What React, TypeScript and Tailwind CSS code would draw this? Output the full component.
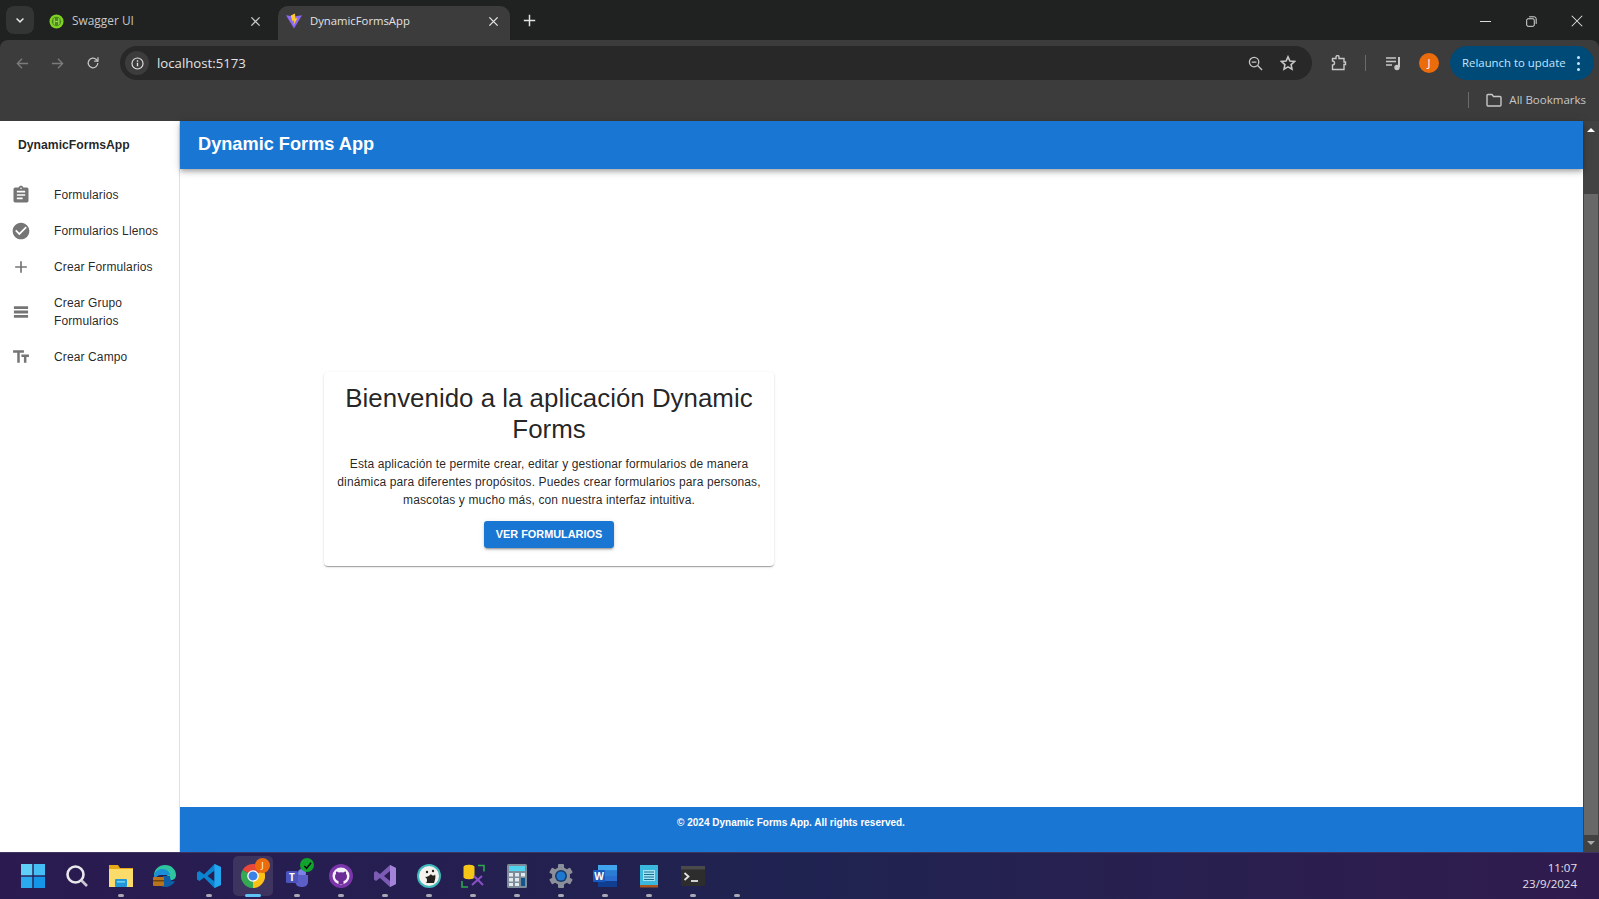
import type { ReactNode } from 'react'

const navItems = [
  {
    label: 'Formularios',
    d: 'M19 3h-4.18C14.4 1.84 13.3 1 12 1c-1.3 0-2.4.84-2.82 2H5c-1.1 0-2 .9-2 2v14c0 1.1.9 2 2 2h14c1.1 0 2-.9 2-2V5c0-1.1-.9-2-2-2zm-7 0c.55 0 1 .45 1 1s-.45 1-1 1-1-.45-1-1 .45-1 1-1zm2 14H7v-2h7v2zm3-4H7v-2h10v2zm0-4H7V7h10v2z',
  },
  {
    label: 'Formularios Llenos',
    d: 'M12 2C6.48 2 2 6.48 2 12s4.48 10 10 10 10-4.48 10-10S17.52 2 12 2zm-2 15l-5-5 1.41-1.41L10 14.17l7.59-7.59L19 8l-9 9z',
  },
  { label: 'Crear Formularios', d: 'M19 13h-6v6h-2v-6H5v-2h6V5h2v6h6v2z' },
  { label: 'Crear Grupo Formularios', d: 'M3.5 5h17v3.4h-17zM3.5 10.3h17v3.4h-17zM3.5 15.6h17V19h-17z' },
  { label: 'Crear Campo', d: 'M2.5 4v3h5v12h3V7h5V4h-13zm19 5h-9v3h3v7h3v-7h3V9z' },
]

function Stroke({ size = 16, className, children }: { size?: number; className?: string; children: ReactNode }) {
  return (
    <svg width={size} height={size} viewBox="0 0 16 16" fill="none" stroke="currentColor" strokeWidth="1.4" className={className}>
      {children}
    </svg>
  )
}

function Tab({ active, title, icon }: { active?: boolean; title: string; icon: ReactNode }) {
  return (
    <div className={`flex h-[34px] items-center rounded-t-[10px] pb-[4px] ${active ? 'w-[232px] bg-[#3c3c3c] pl-[8px] text-[#e3e3e3]' : 'w-[244px] pl-[14px] text-[#c7c7c7]'}`}>
      <span className="flex w-[16px] justify-center">{icon}</span>
      <span className={`ml-[8px] w-[178px] ${active ? 'text-[11.3px]' : 'text-[11.9px]'}`}>{title}</span>
      <Stroke size={11}>
        <path d="M2 2l12 12M14 2L2 14" strokeWidth="2" />
      </Stroke>
    </div>
  )
}

function BrowserChrome() {
  return (
    <header className="shrink-0 font-['Open_Sans',sans-serif]">
      <div className="flex h-[40px] items-end bg-[#202121] pl-[6px]">
        <div className="mb-[6px] flex h-[28px] w-[28px] items-center justify-center rounded-[8px] bg-[#333535] text-[#e3e3e3]">
          <Stroke size={10}>
            <path d="M2.5 5.5L8 11l5.5-5.5" strokeWidth="2.4" />
          </Stroke>
        </div>
        <Tab
          title="Swagger UI"
          icon={
            <svg width="15" height="15" viewBox="0 0 16 16">
              <circle cx="8" cy="8" r="7.5" fill="#7fd321" />
              <circle cx="8" cy="8" r="5" fill="#4a8b17" />
              <path d="M6 5H5.5v6H6M10 5h.5v6H10M6.8 8h2.4" stroke="#b9f06e" strokeWidth="1" fill="none" />
            </svg>
          }
        />
        <Tab
          active
          title="DynamicFormsApp"
          icon={
            <svg width="16" height="16" viewBox="0 0 16 16">
              <path d="M0 2.2L8 15.5 16 2.2 8 3.6z" fill="#8d68f5" />
              <path d="M9 .5L4.8 2.5 6.3 8 8 7.5 7.6 12l4-7-2.3.5z" fill="#fdc92e" />
            </svg>
          }
        />
        <div className="mb-[13px] ml-[13px] text-[#e3e3e3]">
          <Stroke size={13}>
            <path d="M8 1v14M1 8h14" strokeWidth="1.8" />
          </Stroke>
        </div>
        <div className="mb-[13px] ml-auto flex items-center text-[#e3e3e3]">
          <div className="flex w-[46px] justify-center">
            <Stroke size={11}>
              <path d="M0 8h16" />
            </Stroke>
          </div>
          <div className="flex w-[46px] justify-center">
            <Stroke size={11}>
              <rect x="1" y="4" width="11" height="11" rx="2" />
              <path d="M4.5 1.2h7.3a3 3 0 0 1 3 3v7.3" />
            </Stroke>
          </div>
          <div className="flex w-[45px] justify-center pl-[1px]">
            <Stroke size={12}>
              <path d="M1 1l14 14M15 1L1 15" />
            </Stroke>
          </div>
        </div>
      </div>

      <div className="bg-[#202121]">
        <div className="rounded-t-[8px] bg-[#3c3c3c]">
          <div className="flex h-[42px] items-center pt-[4px] pl-[15px]">
            <div className="flex w-[105px] items-center text-[#7b7b7b]">
              <Stroke size={15}>
                <path d="M14 8H2.5M7.5 3l-5 5 5 5" />
              </Stroke>
              <Stroke size={15} className="ml-[20px]">
                <path d="M2 8h11.5M8.5 3l5 5-5 5" />
              </Stroke>
              <Stroke size={14} className="ml-[21px] text-[#c7c7c7]">
                <path d="M13.5 8A5.5 5.5 0 1 1 11.8 4L13.5 5.7" />
                <path d="M13.7 1.5v4.4H9.3" />
              </Stroke>
            </div>
            <div className="flex h-[34px] w-[1192px] items-center rounded-full bg-[#282828] pl-[5px] pr-[16px]">
              <div className="flex h-[24px] w-[24px] items-center justify-center rounded-full bg-[#3c3c3c] text-[#e3e3e3]">
                <Stroke size={13}>
                  <circle cx="8" cy="8" r="6.8" />
                  <path d="M8 7v4.5M8 4v1.7" strokeWidth="1.7" />
                </Stroke>
              </div>
              <span className="ml-[8px] pt-[1px] text-[13.2px] text-[#e3e3e3]">localhost:5173</span>
              <div className="ml-auto flex items-center gap-[17px] text-[#c7c7c7]">
                <Stroke size={15}>
                  <circle cx="6.5" cy="6.5" r="5" />
                  <path d="M10.2 10.2L15 15M4 6.5h5" />
                </Stroke>
                <Stroke size={16}>
                  <path d="M8 1.8l1.9 4.2 4.6.5-3.4 3.1.9 4.5L8 11.8l-4 2.3.9-4.5L1.5 6.5l4.6-.5z" strokeWidth="1.6" />
                </Stroke>
              </div>
            </div>
            <div className="ml-[19px] text-[#c7c7c7]">
              <Stroke size={16}>
                <path d="M1.5 3.5H5V2a1.5 1.5 0 0 1 3 0v1.5h5V7h1.500v2.500H13v5H1.500V10a2 2 0 0 0 0-4z" />
              </Stroke>
            </div>
            <div className="ml-[18px] h-[16px] w-[1px] bg-[#6b6b6b]" />
            <div className="ml-[20px] text-[#c7c7c7]">
              <Stroke size={16}>
                <path d="M0 3h10M0 6.5h10M0 10h6" />
                <path d="M13 2v10" strokeWidth="2" />
                <circle cx="11" cy="12.5" r="2" fill="currentColor" />
              </Stroke>
            </div>
            <div className="ml-[17px] flex h-[20px] w-[20px] items-center justify-center rounded-full bg-[#ec6c0b] text-[11px] text-white">J</div>
            <div className="ml-[11px] flex h-[34px] w-[144px] items-center rounded-full bg-[#004a77] pl-[12px] text-[11.4px] text-[#c2e7ff]">
              Relaunch to update
              <span className="ml-[11px] flex flex-col gap-[3px]">
                <i className="h-[3px] w-[3px] rounded-full bg-[#c2e7ff]" />
                <i className="h-[3px] w-[3px] rounded-full bg-[#c2e7ff]" />
                <i className="h-[3px] w-[3px] rounded-full bg-[#c2e7ff]" />
              </span>
            </div>
          </div>
          <div className="flex h-[39px] items-center justify-end pr-[13px] pb-[3px] text-[#c7c7c7]">
            <div className="mr-[17px] h-[16px] w-[1px] bg-[#6b6b6b]" />
            <Stroke size={16}>
              <path d="M1 3.5a1 1 0 0 1 1-1h4l1.5 2H14a1 1 0 0 1 1 1V13a1 1 0 0 1-1 1H2a1 1 0 0 1-1-1z" />
            </Stroke>
            <span className="ml-[7px] text-[11.5px]">All Bookmarks</span>
          </div>
        </div>
      </div>
    </header>
  )
}

function Sidebar() {
  return (
    <aside className="w-[180px] shrink-0 border-r border-[#e0e0e0] bg-white">
      <div className="flex h-[48px] items-center pl-[18px] pt-[1px] text-[12.2px] font-bold text-[rgba(0,0,0,0.87)]">DynamicFormsApp</div>
      <nav className="pt-[8px]">
        {navItems.map((item) => (
          <div key={item.label} className="flex items-center pl-[11px] pr-[16px]">
            <svg width="20" height="20" viewBox="0 0 24 24" fill="#757575" className="shrink-0">
              <path d={item.d} />
            </svg>
            <span className="ml-[23px] py-[9px] text-[12px] leading-[18px] tracking-[0.01em] text-[rgba(0,0,0,0.87)]">{item.label}</span>
          </div>
        ))}
      </nav>
    </aside>
  )
}

function Scrollbar() {
  return (
    <div className="flex w-[16px] shrink-0 flex-col items-center bg-[#424242]">
      <div className="mt-[7px] h-0 w-0 border-x-[4px] border-b-[4px] border-x-transparent border-b-white" />
      <div className="mt-[62px] h-[641px] w-[14px] bg-[#686868]" />
      <div className="mt-[6px] h-0 w-0 border-x-[4px] border-t-[4px] border-x-transparent border-t-[#a8a8a8]" />
    </div>
  )
}

function TaskIcon({ children, active, running = true }: { children: ReactNode; active?: boolean; running?: boolean }) {
  return (
    <div className="relative flex h-[44px] w-[44px] items-center justify-center">
      {active && <span className="absolute inset-x-[2px] bottom-[2px] top-[2px] rounded-[5px] bg-[#3d3560]" />}
      <span className="relative flex">{children}</span>
      {running && <span className={`absolute bottom-[1px] h-[3px] rounded-full ${active ? 'w-[16px] bg-[#5fc4f5]' : 'w-[6px] bg-[#a9a6b5]'}`} />}
    </div>
  )
}

function Taskbar() {
  return (
    <footer className="flex h-[47px] shrink-0 items-center border-t border-[#3f3560] bg-linear-to-r from-[#2a1a50] via-[#1f2350] to-[#301b4e] pl-[11px] font-['Open_Sans',sans-serif]">
      <TaskIcon running={false}>
        <svg width="24" height="24" viewBox="0 0 24 24">
          <rect width="11.3" height="11.3" fill="#5fd0f8" />
          <rect x="12.7" width="11.3" height="11.3" fill="#45bdf5" />
          <rect y="12.7" width="11.3" height="11.3" fill="#2aa9ef" />
          <rect x="12.7" y="12.7" width="11.3" height="11.3" fill="#1495e8" />
        </svg>
      </TaskIcon>
      <TaskIcon running={false}>
        <svg width="24" height="24" viewBox="0 0 24 24" fill="none">
          <circle cx="10.5" cy="10.5" r="8" stroke="#e8e8ea" strokeWidth="2.6" />
          <path d="M16.5 16.5L22 22" stroke="#c9c9cf" strokeWidth="2.6" />
        </svg>
      </TaskIcon>
      <TaskIcon>
        <svg width="24" height="24" viewBox="0 0 24 24">
          <path d="M0 1h9l2 3h13v19H0z" fill="#e8a917" />
          <rect y="5" width="24" height="18" fill="#fbdc6a" />
          <rect x="6" y="15" width="12" height="8" rx="1" fill="#1f97d8" />
          <rect x="8" y="17" width="8" height="1.6" fill="#6fd0f5" />
        </svg>
      </TaskIcon>
      <TaskIcon running={false}>
        <svg width="24" height="24" viewBox="0 0 24 24">
          <path d="M1 12C1 5 6 1 12 1c7 0 11 5 11 10 0 3-2 5-5 5-2 0-3-1-3-2 0-3-3-6-7-6-3 0-6 2-7 4z" fill="#2fc4a0" />
          <path d="M1 12c1-5 5-7 8-7 5 0 8 3 8 6H8c-3 0-6 2-7 5z" fill="#1a8fd8" />
          <path d="M10 12h7c0 5 3 6 5 5-2 4-6 6-10 6-2 0-4-1-5-2z" fill="#0c5fa8" />
          <rect y="13" width="11" height="9" rx="1" fill="#b8741a" />
          <rect y="16" width="11" height="1.5" fill="#6e430d" />
        </svg>
      </TaskIcon>
      <TaskIcon>
        <svg width="24" height="24" viewBox="0 0 24 24">
          <path d="M17.5 0L24 3v18l-6.5 3L7 13.5 2.5 17 0 15.5v-7L2.5 7 7 10.500z" fill="#0a84d0" />
          <path d="M17.5 6.5v11L10.500 12z" fill="#2a1f50" />
          <path d="M17.5 0L24 3v18l-6.5 3v-6.500-11z" fill="#23a5ef" />
        </svg>
      </TaskIcon>
      <TaskIcon active>
        <svg width="24" height="24" viewBox="0 0 24 24">
          <path d="M12 12L1.6 6A12 12 0 0 1 22.4 6z" fill="#e8483a" />
          <path d="M12 12L22.4 6A12 12 0 0 1 12 24z" fill="#fbc116" />
          <path d="M12 12L12 24A12 12 0 0 1 1.6 6z" fill="#34a853" />
          <circle cx="12" cy="12" r="5.8" fill="#fff" />
          <circle cx="12" cy="12" r="4.5" fill="#3b82e8" />
        </svg>
        <span className="absolute -right-[5px] -top-[6px] flex h-[15px] w-[15px] items-center justify-center rounded-full bg-[#ec6c0b] text-[9px] text-white">J</span>
      </TaskIcon>
      <TaskIcon>
        <svg width="24" height="24" viewBox="0 0 24 24">
          <circle cx="17" cy="9" r="4" fill="#7b83eb" />
          <path d="M10 11h13v7a5 5 0 0 1-5 5h-2a6 6 0 0 1-6-6z" fill="#5b5fc7" />
          <rect x="1" y="7" width="12" height="12" rx="1.5" fill="#4b53bc" />
        </svg>
        <span className="absolute left-[4px] top-[6px] text-[10px] font-bold leading-[14px] text-white">T</span>
        <span className="absolute -right-[5px] -top-[6px] flex h-[14px] w-[14px] items-center justify-center rounded-full bg-[#12a32e]">
          <svg width="9" height="9" viewBox="0 0 10 10" fill="none" stroke="#101010" strokeWidth="1.8">
            <path d="M1.5 5.5L4 8l5-6" />
          </svg>
        </span>
      </TaskIcon>
      <TaskIcon>
        <svg width="24" height="24" viewBox="0 0 24 24">
          <circle cx="12" cy="12" r="12" fill="#7a35a8" />
          <circle cx="12" cy="12" r="8.5" fill="#f4f0f8" />
          <path d="M9.5 20v-3c-2-.5-3.5-2-3.5-4.500 0-1 .3-2 1-2.700-.2-.8-.1-1.700.2-2.300 1 0 1.800.5 2.500 1a8 8 0 0 1 4.600 0c.7-.5 1.500-1 2.500-1 .3.600.4 1.500.2 2.300.7.700 1 1.700 1 2.700 0 2.500-1.500 4-3.500 4.500v3z" fill="#6a2c94" />
        </svg>
      </TaskIcon>
      <TaskIcon>
        <svg width="24" height="24" viewBox="0 0 24 24">
          <path d="M17 1l6 3v16l-6 3L7 14l-4 3-2-1.5v-7L3 7l4 3z" fill="#7c5bb5" />
          <path d="M17 7v10l-6-5z" fill="#2a1c50" />
          <path d="M17 1l6 3v16l-6 3v-6V7z" fill="#a384d8" />
        </svg>
      </TaskIcon>
      <TaskIcon>
        <svg width="24" height="24" viewBox="0 0 24 24">
          <circle cx="12" cy="12" r="12" fill="#3fb8bc" />
          <circle cx="12" cy="12" r="10" fill="#f5f2ee" />
          <path d="M9 19c2-2 1-5-1-6 3 0 5-2 6-3 1 2 4 2 4 0 1 3 0 6-1 9z" fill="#26211f" />
          <circle cx="10" cy="8" r="1.2" fill="#26211f" />
          <circle cx="16" cy="7" r="1.2" fill="#26211f" />
        </svg>
      </TaskIcon>
      <TaskIcon>
        <svg width="24" height="24" viewBox="0 0 24 24" fill="none">
          <path d="M2.5 3c0-3 11-3 11 0v10c0 3-11 3-11 0z" fill="#f5c518" />
          <path d="M17 1.5h6v6M1 17v6h6" stroke="#2fa84f" strokeWidth="1.6" />
          <path d="M11 21l10-9M13 12l9 9" stroke="#8b4fc8" strokeWidth="2" />
        </svg>
      </TaskIcon>
      <TaskIcon>
        <svg width="24" height="24" viewBox="0 0 24 24">
          <rect x="2" width="20" height="24" rx="1.5" fill="#7c8c9a" />
          <rect x="4" y="2" width="16" height="5" fill="#4fd3ee" />
          <rect x="4" y="9" width="4" height="3.5" fill="#e3e8ec" />
          <rect x="10" y="9" width="4" height="3.5" fill="#e3e8ec" />
          <rect x="16" y="9" width="4" height="3.5" fill="#e3e8ec" />
          <rect x="4" y="14" width="4" height="3.5" fill="#e3e8ec" />
          <rect x="10" y="14" width="4" height="3.5" fill="#e3e8ec" />
          <rect x="16" y="14" width="4" height="8" fill="#16548c" />
          <rect x="4" y="19" width="4" height="3" fill="#e3e8ec" />
          <rect x="10" y="19" width="4" height="3" fill="#e3e8ec" />
        </svg>
      </TaskIcon>
      <TaskIcon>
        <svg width="24" height="24" viewBox="0 0 24 24">
          <g fill="#8a8f99">
            <rect x="9" y="0" width="6" height="24" rx="1" />
            <rect x="9" y="0" width="6" height="24" rx="1" transform="rotate(60 12 12)" />
            <rect x="9" y="0" width="6" height="24" rx="1" transform="rotate(120 12 12)" />
          </g>
          <circle cx="12" cy="12" r="9" fill="#8a8f99" />
          <circle cx="12" cy="12" r="6" fill="#16396b" />
          <circle cx="12" cy="12" r="4.5" fill="#1e78d0" />
        </svg>
      </TaskIcon>
      <TaskIcon>
        <svg width="24" height="24" viewBox="0 0 24 24">
          <rect x="5" y="1" width="19" height="22" rx="1" fill="#2b6cd0" />
          <rect x="5" y="1" width="19" height="5.5" fill="#41a5ee" />
          <rect x="5" y="6.5" width="19" height="5.5" fill="#2b7cd3" />
          <rect x="5" y="17" width="19" height="6" fill="#103f91" />
          <rect y="6" width="12" height="12" rx="1" fill="#185abd" />
        </svg>
        <span className="absolute left-0 top-[5px] w-[12px] text-center text-[10px] font-bold leading-[14px] text-white">W</span>
      </TaskIcon>
      <TaskIcon>
        <svg width="24" height="24" viewBox="0 0 24 24">
          <rect x="3" y="1" width="18" height="22" fill="#39b7dd" />
          <rect x="3" y="21" width="18" height="2.5" fill="#a8551f" />
          <rect x="6" y="6" width="12" height="11" fill="#9fe3f5" />
          <path d="M7 8h10M7 10.5h10M7 13h10M7 15.5h10" stroke="#1a6f8f" strokeWidth="1" />
        </svg>
      </TaskIcon>
      <TaskIcon>
        <svg width="24" height="24" viewBox="0 0 24 24" fill="none">
          <rect y="2" width="24" height="20" rx="1.5" fill="#2d2d2d" />
          <rect y="2" width="24" height="3.5" fill="#4a4a4a" />
          <path d="M3.5 9l4 3.5-4 3.5" stroke="#e3e3e3" strokeWidth="1.8" />
          <path d="M10 17h7" stroke="#e3e3e3" strokeWidth="1.8" />
        </svg>
      </TaskIcon>
      <TaskIcon>
        <span />
      </TaskIcon>
      <div className="ml-auto pr-[22px] text-right text-[11.5px] leading-[16px] text-[#e4e0ea]">
        <div>11:07</div>
        <div>23/9/2024</div>
      </div>
    </footer>
  )
}

export default function App() {
  return (
    <div className="flex h-[899px] w-[1599px] flex-col overflow-hidden bg-white font-['Liberation_Sans',Arial,sans-serif]">
      <BrowserChrome />
      <div className="flex min-h-0 flex-1">
        <Sidebar />
        <div className="flex min-w-0 flex-1 flex-col">
          <div className="relative flex h-[48px] shrink-0 items-center bg-[#1976d2] pl-[18px] text-[18.2px] font-bold text-white shadow-[0_2px_4px_-1px_rgba(0,0,0,0.2),0_4px_5px_0_rgba(0,0,0,0.14),0_1px_10px_0_rgba(0,0,0,0.12)]">
            Dynamic Forms App
          </div>
          <main className="min-h-0 flex-1 pl-[144px] pt-[203px]">
            <div className="w-[450px] rounded-[4px] bg-white px-[13px] pb-[18px] pt-[11px] text-center shadow-[0_2px_1px_-1px_rgba(0,0,0,0.2),0_1px_1px_0_rgba(0,0,0,0.14),0_1px_3px_0_rgba(0,0,0,0.12)]">
              <h1 className="text-[25.9px] leading-[31px] text-[rgba(0,0,0,0.87)]">Bienvenido a la aplicación Dynamic Forms</h1>
              <p className="mt-[10px] text-[12px] leading-[18px] tracking-[0.01em] text-[rgba(0,0,0,0.87)]">
                Esta aplicación te permite crear, editar y gestionar formularios de manera dinámica para diferentes propósitos. Puedes crear formularios para personas, mascotas y mucho más, con nuestra interfaz intuitiva.
              </p>
              <button className="mt-[12px] h-[27px] w-[130px] rounded-[3px] bg-[#1976d2] text-[10.9px] font-bold text-white shadow-[0_3px_1px_-2px_rgba(0,0,0,0.2),0_2px_2px_0_rgba(0,0,0,0.14),0_1px_5px_0_rgba(0,0,0,0.12)]">
                VER FORMULARIOS
              </button>
            </div>
          </main>
          <div className="flex h-[45px] shrink-0 bg-[#1976d2]">
            <div className="w-[1222px] pt-[8px] text-center text-[10px] font-bold text-white">© 2024 Dynamic Forms App. All rights reserved.</div>
          </div>
        </div>
        <Scrollbar />
      </div>
      <Taskbar />
    </div>
  )
}
